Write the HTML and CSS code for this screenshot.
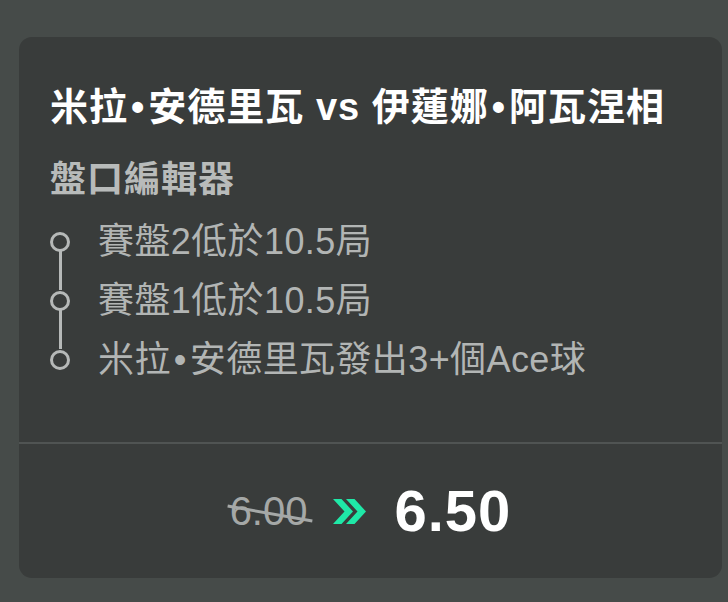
FILE: index.html
```html
<!DOCTYPE html>
<html lang="zh-Hant">
<head>
<meta charset="utf-8">
<link rel="stylesheet" href="styles.css">
</head>
<body>
<div class="card">
  <div class="card-top">
    <h1 class="title">米拉<span class="sep">•</span>安德里瓦 vs 伊蓮娜<span class="sep">•</span>阿瓦涅相</h1>
    <h2 class="subtitle">盤口編輯器</h2>
    <ul class="legs">
      <li class="leg"><span class="dot"></span><span class="leg-text">賽盤2低於10.5局</span></li>
      <li class="leg"><span class="dot"></span><span class="leg-text">賽盤1低於10.5局</span></li>
      <li class="leg"><span class="dot"></span><span class="leg-text">米拉<span class="sep">•</span>安德里瓦發出3+個Ace球</span></li>
    </ul>
  </div>
  <div class="card-bottom">
    <span class="old-odds">6.00</span>
    <svg class="chev" width="33" height="25" viewBox="0 0 33 25" aria-hidden="true">
      <polygon points="0,0 8.5,0 20,12.5 8.5,25 0,25 11.5,12.5" fill="#1fe8a7"/>
      <polygon points="13,0 21.5,0 33,12.5 21.5,25 13,25 24.5,12.5" fill="#1fe8a7"/>
    </svg>
    <span class="new-odds">6.50</span>
  </div>
</div>
</body>
</html>
```

FILE: styles.css
```css
* { box-sizing: border-box; }
html, body {
  margin: 0;
  padding: 0;
}
body {
  width: 728px;
  height: 602px;
  background: #464b49;
  font-family: "Liberation Sans", "Noto Sans CJK TC", sans-serif;
  overflow: hidden;
}
.card {
  margin: 37px 6px 0 19px;
  width: 703px;
  height: 541px;
  background: #393c3b;
  border-radius: 13px;
  display: flex;
  flex-direction: column;
}
.card-top {
  padding: 47px 0 0 31px;
  border-bottom: 2px solid #505453;
  height: 407px;
}
.title {
  margin: 0;
  font-size: 38px;
  line-height: 46px;
  font-weight: 700;
  letter-spacing: 1px;
  color: #ffffff;
  white-space: nowrap;
}
.sep {
  margin: 0 3px;
}
.subtitle {
  margin: 28px 0 0 0;
  font-size: 36px;
  line-height: 44px;
  font-weight: 700;
  letter-spacing: 1px;
  color: #b8bbba;
}
.legs {
  list-style: none;
  margin: 10px 0 0 0;
  padding: 0;
}
.leg {
  position: relative;
  display: flex;
  align-items: center;
  height: 59px;
}
.dot {
  width: 20px;
  height: 20px;
  border: 3px solid #b6b9b8;
  border-radius: 50%;
  flex: none;
  margin-right: 28px;
}
.leg:not(:last-child)::after {
  content: "";
  position: absolute;
  left: 8.5px;
  top: 39px;
  width: 3px;
  height: 39px;
  background: #b6b9b8;
}
.leg-text {
  font-size: 36px;
  line-height: 59px;
  letter-spacing: 0.4px;
  color: #b2b5b4;
  white-space: nowrap;
}
.card-bottom {
  flex: 1;
  display: flex;
  align-items: center;
  justify-content: center;
}
.old-odds {
  position: relative;
  font-size: 40px;
  line-height: 48px;
  color: #a5a8a7;
  margin-right: 26px;
}
.old-odds::after {
  content: "";
  position: absolute;
  left: -3px;
  right: -5px;
  top: 50%;
  margin-top: 1px;
  height: 3px;
  background: #a5a8a7;
  transform: rotate(10deg);
}
.chev {
  flex: none;
  margin-right: 28px;
}
.new-odds {
  font-size: 58px;
  line-height: 64px;
  font-weight: 700;
  letter-spacing: 1px;
  color: #ffffff;
}
```
